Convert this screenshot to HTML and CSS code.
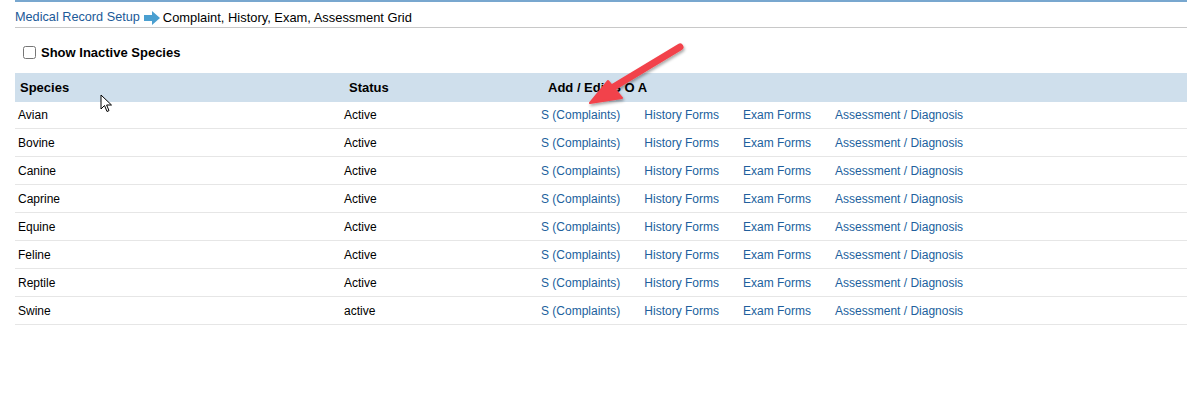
FILE: index.html
```html
<!DOCTYPE html>
<html lang="en">
<head>
    <meta charset="UTF-8">
    <meta name="viewport" content="width=device-width, initial-scale=1.0">
    <title>Complaint, History, Exam, Assessment Grid</title>
    <link rel="stylesheet" href="styles.css">
</head>
<body>
    <div class="page">
        <div class="breadcrumb">
            <a href="#" class="crumb-link">Medical Record Setup</a>
            <svg class="crumb-arrow" width="16" height="14" viewBox="0 0 16 14">
                <path d="M0 4 H8 V0 L16 7 L8 14 V10 H0 Z" fill="#4a9fd0"/>
            </svg>
            <span class="crumb-current">Complaint, History, Exam, Assessment Grid</span>
        </div>

        <label class="filter">
            <input type="checkbox" id="showInactive">
            <span>Show Inactive Species</span>
        </label>

        <table class="grid">
            <thead>
                <tr>
                    <th class="col-species">Species</th>
                    <th class="col-status">Status</th>
                    <th class="col-forms">Add / Edit S O A</th>
                </tr>
            </thead>
            <tbody id="gridBody">
                <!-- rows are added by the script -->
            </tbody>
        </table>
    </div>

    <!-- annotation arrow drawn over the screenshot -->
    <svg class="callout" width="120" height="80" viewBox="0 0 120 80">
        <defs>
            <filter id="shadow" x="-20%" y="-20%" width="140%" height="140%">
                <feDropShadow dx="1" dy="2" stdDeviation="1.5" flood-color="#000" flood-opacity="0.35"/>
            </filter>
        </defs>
        <g filter="url(#shadow)" fill="#f2434b" stroke="#f2434b">
            <line x1="108" y1="9" x2="40" y2="50" stroke-width="7" stroke-linecap="round"/>
            <path d="M18 65 L36 43 L50 60 Z" stroke-width="2" stroke-linejoin="round"/>
        </g>
    </svg>

    <!-- mouse pointer -->
    <svg class="pointer" width="13" height="20" viewBox="0 0 13 20">
        <path d="M1 1 L1 15 L4.5 11.5 L7 17.5 L9 16.6 L6.6 11 L11.5 11 Z" fill="#fff" stroke="#000" stroke-width="1" stroke-linejoin="round"/>
    </svg>

    <script>
        const species = [
            { name: 'Avian', status: 'Active' },
            { name: 'Bovine', status: 'Active' },
            { name: 'Canine', status: 'Active' },
            { name: 'Caprine', status: 'Active' },
            { name: 'Equine', status: 'Active' },
            { name: 'Feline', status: 'Active' },
            { name: 'Reptile', status: 'Active' },
            { name: 'Swine', status: 'active' }
        ];

        function renderGrid() {
            const body = document.getElementById('gridBody');
            body.innerHTML = '';

            species.forEach(item => {
                const row = document.createElement('tr');
                row.innerHTML = `
                    <td class="col-species">${item.name}</td>
                    <td class="col-status">${item.status}</td>
                    <td class="col-forms">
                        <div class="form-links">
                            <a href="#">S (Complaints)</a>
                            <a href="#">History Forms</a>
                            <a href="#">Exam Forms</a>
                            <a href="#">Assessment / Diagnosis</a>
                        </div>
                    </td>
                `;
                body.appendChild(row);
            });
        }

        renderGrid();
    </script>
</body>
</html>
```

FILE: styles.css
```css
body {
    margin: 0;
    font-family: "Liberation Sans", Arial, sans-serif;
    color: #000;
    background-color: #fff;
}
.page {
    margin-left: 15px;
    border-top: 2px solid #78a7cf;
}
.breadcrumb {
    display: flex;
    align-items: center;
    padding: 8px 0 2px;
    line-height: 15px;
    font-size: 13px;
    border-bottom: 1px solid #c8c8c8;
}
.crumb-link {
    color: #1b5a98;
    font-size: 12.7px;
    text-decoration: none;
}
.crumb-arrow {
    margin: 0 3px 0 4px;
}
.crumb-current {
    color: #000;
    font-size: 12.9px;
}
.filter {
    display: flex;
    align-items: center;
    gap: 5px;
    margin: 16px 0 13px 8px;
    height: 16px;
    font-size: 13px;
    font-weight: bold;
}
.filter input {
    margin: 0;
    width: 13px;
    height: 13px;
}
.grid {
    width: 100%;
    border-collapse: collapse;
    font-size: 12px;
}
.grid th {
    height: 29px;
    padding: 0;
    background-color: #cfdfec;
    font-size: 13px;
    font-weight: bold;
    text-align: left;
}
.grid td {
    height: 27px;
    padding: 0;
    border-bottom: 1px solid #e6e6e6;
}
.grid tbody tr:first-child td {
    height: 25px;
    padding-bottom: 1px;
}
.grid th.col-species {
    padding-left: 5px;
}
.grid td.col-species {
    padding-left: 3px;
    width: 322px;
}
.grid th.col-status {
    padding-left: 9px;
}
.grid td.col-status {
    padding-left: 4px;
    width: 193px;
}
.grid th.col-forms {
    padding-left: 11px;
}
.grid td.col-forms {
    padding-left: 4px;
}
.form-links {
    display: flex;
    gap: 24px;
}
.form-links a {
    color: #215f9d;
    text-decoration: none;
}
.callout {
    position: absolute;
    left: 572px;
    top: 38px;
}
.pointer {
    position: absolute;
    left: 100px;
    top: 94px;
}
```
